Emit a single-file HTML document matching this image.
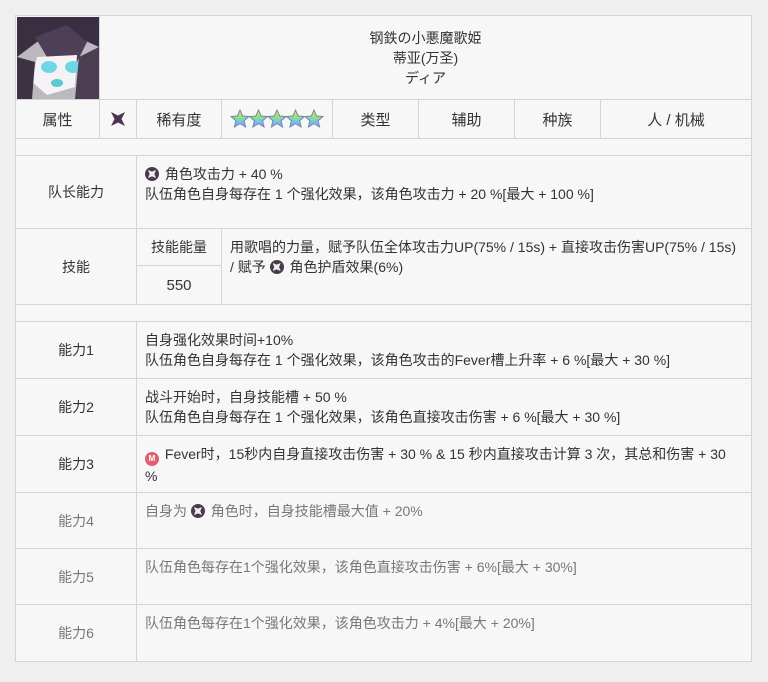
<!DOCTYPE html>
<html><head><meta charset="utf-8"><style>
body{margin:0;width:768px;height:682px;background:#efefef;font-family:"Liberation Sans","Noto Sans CJK SC",sans-serif;font-size:14px;color:#333;overflow:hidden;position:relative}
.c{position:absolute;box-sizing:border-box;border-right:1px solid #d4d4d4;border-bottom:1px solid #d4d4d4;background:#f7f7f7}
.m{display:flex;align-items:center;justify-content:center;text-align:center}
.t{padding:8px 8px 0 8px;line-height:20px}
.g{color:#777}
.ic{display:inline-block;width:14px;height:14px;border-radius:50%;background:#4a3a4e;vertical-align:-2px;position:relative;margin-right:2px}
.ic:after{content:"";position:absolute;left:3px;top:3px;width:8px;height:8px;background:#eee;clip-path:polygon(50% 20%,100% 0,80% 50%,100% 100%,50% 80%,0 100%,20% 50%,0 0)}
.mi{display:inline-block;width:14px;height:14px;border-radius:50%;background:#e06070;vertical-align:-2px;color:#fff;font-size:8px;line-height:14px;text-align:center;font-weight:bold;margin-right:2px}
</style></head><body>
<div style="position:absolute;left:15px;top:15px;width:737px;height:647px;border:1px solid #d4d4d4;border-right:none;border-bottom:none;box-sizing:border-box"></div>
<div class="c" style="left:16px;top:16px;width:84px;height:84px;padding:1px">
<svg width="82" height="82" viewBox="0 0 82 82"><rect width="82" height="82" fill="#bcb8c0"/><path d="M0 0H82V30L60 20 40 15 20 25 0 40Z" fill="#3a2f40"/><path d="M18 20L50 8 70 25 60 45 30 40Z" fill="#4d3f55"/><path d="M20 40 60 38 58 70 30 78 15 65Z" fill="#f4f2f5"/><ellipse cx="32" cy="50" rx="8" ry="6" fill="#6fd6e6"/><ellipse cx="56" cy="50" rx="8" ry="6" fill="#6fd6e6"/><ellipse cx="40" cy="66" rx="6" ry="4" fill="#5cc8d6"/><path d="M0 40 18 45 15 82H0Z" fill="#3d3142"/><path d="M62 40 82 30V82H58Z" fill="#4a3e50"/></svg></div>
<div class="c m" style="left:100px;top:16px;width:652px;height:84px;flex-direction:column;line-height:20px"><div>钢鉄の小悪魔歌姫</div><div>蒂亚(万圣)</div><div>ディア</div></div>
<div class="c m" style="left:16px;top:100px;width:84px;height:39px;font-size:15px">属性</div>
<div class="c m" style="left:100px;top:100px;width:37px;height:39px"><div style="width:14px;height:14px;background:#4a3552;clip-path:polygon(50% 25%,100% 0,75% 50%,100% 100%,50% 75%,0 100%,25% 50%,0 0)"></div></div>
<div class="c m" style="left:137px;top:100px;width:85px;height:39px;font-size:15px">稀有度</div>
<div class="c m" style="left:222px;top:100px;width:111px;height:39px"><svg width="94" height="20" viewBox="0 0 94 20"><defs><linearGradient id="r" x1="0" y1="0" x2="0" y2="1"><stop offset="0" stop-color="#f6e35a"/><stop offset=".4" stop-color="#9be07a"/><stop offset=".7" stop-color="#6cc6f0"/><stop offset="1" stop-color="#e07ad8"/></linearGradient></defs><g fill="url(#r)" stroke="#6a8ab0" stroke-width="1"><path id="s" d="M10 1l2.6 6 6.4.5-4.9 4.2 1.5 6.3L10 14.6 4.4 18l1.5-6.3L1 7.5l6.4-.5z"/><use href="#s" x="18.5"/><use href="#s" x="37"/><use href="#s" x="55.5"/><use href="#s" x="74"/></g></svg></div>
<div class="c m" style="left:333px;top:100px;width:86px;height:39px;font-size:15px">类型</div>
<div class="c m" style="left:419px;top:100px;width:96px;height:39px;font-size:15px">辅助</div>
<div class="c m" style="left:515px;top:100px;width:86px;height:39px;font-size:15px">种族</div>
<div class="c m" style="left:601px;top:100px;width:151px;height:39px;font-size:15px">人 / 机械</div>
<div class="c" style="left:16px;top:139px;width:736px;height:17px"></div>
<div class="c m" style="left:16px;top:156px;width:121px;height:73px">队长能力</div>
<div class="c t" style="left:137px;top:156px;width:615px;height:73px"><span class="ic"></span> 角色攻击力 + 40 %<br>队伍角色自身每存在 1 个强化效果，该角色攻击力 + 20 %[最大 + 100 %]</div>
<div class="c m" style="left:16px;top:229px;width:121px;height:76px">技能</div>
<div class="c m" style="left:137px;top:229px;width:85px;height:37px">技能能量</div>
<div class="c m" style="left:137px;top:266px;width:85px;height:39px;font-size:15px">550</div>
<div class="c t" style="left:222px;top:229px;width:530px;height:76px">用歌唱的力量，赋予队伍全体攻击力UP(75% / 15s) + 直接攻击伤害UP(75% / 15s)<br>/ 赋予 <span class="ic"></span> 角色护盾效果(6%)</div>
<div class="c" style="left:16px;top:305px;width:736px;height:17px"></div>
<div class="c m" style="left:16px;top:322px;width:121px;height:57px">能力1</div>
<div class="c t" style="left:137px;top:322px;width:615px;height:57px">自身强化效果时间+10%<br>队伍角色自身每存在 1 个强化效果，该角色攻击的Fever槽上升率 + 6 %[最大 + 30 %]</div>
<div class="c m" style="left:16px;top:379px;width:121px;height:57px">能力2</div>
<div class="c t" style="left:137px;top:379px;width:615px;height:57px">战斗开始时，自身技能槽 + 50 %<br>队伍角色自身每存在 1 个强化效果，该角色直接攻击伤害 + 6 %[最大 + 30 %]</div>
<div class="c m" style="left:16px;top:436px;width:121px;height:57px">能力3</div>
<div class="c t" style="left:137px;top:436px;width:615px;height:57px"><span class="mi">M</span> Fever时，15秒内自身直接攻击伤害 + 30 % &amp; 15 秒内直接攻击计算 3 次，其总和伤害 + 30<br>%</div>
<div class="c m g" style="left:16px;top:493px;width:121px;height:56px">能力4</div>
<div class="c t g" style="left:137px;top:493px;width:615px;height:56px">自身为 <span class="ic"></span> 角色时，自身技能槽最大值 + 20%</div>
<div class="c m g" style="left:16px;top:549px;width:121px;height:56px">能力5</div>
<div class="c t g" style="left:137px;top:549px;width:615px;height:56px">队伍角色每存在1个强化效果，该角色直接攻击伤害 + 6%[最大 + 30%]</div>
<div class="c m g" style="left:16px;top:605px;width:121px;height:57px">能力6</div>
<div class="c t g" style="left:137px;top:605px;width:615px;height:57px">队伍角色每存在1个强化效果，该角色攻击力 + 4%[最大 + 20%]</div>
</body></html>
